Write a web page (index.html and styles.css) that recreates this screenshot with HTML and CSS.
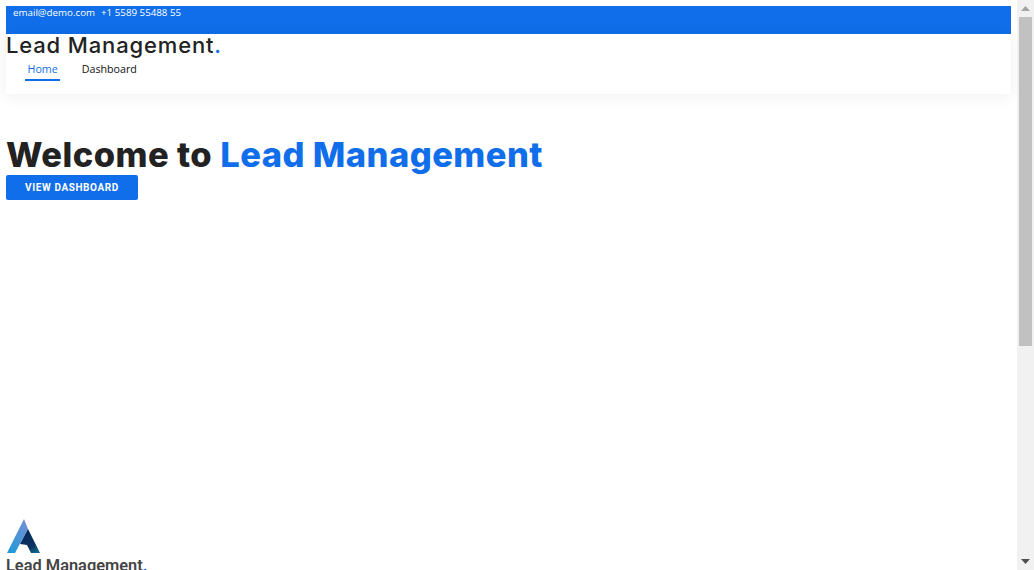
FILE: index.html
```html
<!DOCTYPE html>
<html lang="en">
<head>
<meta charset="utf-8">
<title>Lead Management</title>
<link rel="stylesheet" href="styles.css">
</head>
<body>
<div class="page">
  <div class="topbar"><span>email@demo.com</span><span>+1 5589 55488 55</span></div>
  <header class="header">
    <h1 class="logo">Lead Management<span class="dot">.</span></h1>
    <nav class="nav">
      <a class="nav-link active" href="#">Home</a>
      <a class="nav-link" href="#">Dashboard</a>
    </nav>
  </header>
  <section class="hero">
    <h2 class="hero-title">Welcome to <span class="accent">Lead Management</span></h2>
    <a class="btn" href="#">VIEW DASHBOARD</a>
  </section>
  <footer class="footer">
    <svg class="footer-logo" width="35" height="39" viewBox="0 0 35 39" aria-hidden="true">
      <defs>
        <linearGradient id="lg1" x1="0" y1="1" x2="0.7" y2="0">
          <stop offset="0" stop-color="#1a9bd8"/>
          <stop offset="1" stop-color="#6d90d6"/>
        </linearGradient>
        <linearGradient id="lg2" x1="0.3" y1="0" x2="0.8" y2="1">
          <stop offset="0" stop-color="#08265f"/>
          <stop offset="0.7" stop-color="#0a3260"/>
          <stop offset="1" stop-color="#116a8c"/>
        </linearGradient>
      </defs>
      <path d="M18 1 L1 35 L9 35 L22 11 Z" fill="url(#lg1)"/>
      <path d="M22 11 L34 35 L25 35 L21 27 L14 26 Z" fill="url(#lg2)"/>
    </svg>
    <div class="footer-name">Lead Management<span class="footer-dot">.</span></div>
  </footer>
</div>
<aside class="scrollbar" aria-hidden="true">
  <div class="sb-button">
    <svg width="9" height="5" viewBox="0 0 9 5"><path d="M4.5 0L9 5H0z" fill="#a3a3a3"/></svg>
  </div>
  <div class="sb-track"><div class="sb-thumb"></div></div>
  <div class="sb-button">
    <svg width="9" height="5" viewBox="0 0 9 5"><path d="M0 0H9L4.5 5z" fill="#505050"/></svg>
  </div>
</aside>
</body>
</html>
```
FILE: styles.css
```css
html {
  overflow: hidden;
  background: #fff;
}
body {
  margin: 0;
  font-family: "Open Sans", sans-serif;
  color: #222;
}
.page {
  padding: 6px 23px 365px 6px;
}
.scrollbar {
  position: fixed;
  top: 0;
  right: 0;
  bottom: 0;
  width: 17px;
  display: flex;
  flex-direction: column;
  background: #f1f1f1;
}
.sb-button {
  flex: none;
  height: 17px;
  display: flex;
  align-items: center;
  justify-content: center;
}
.sb-track {
  flex: 1;
  padding: 0 2px;
}
.sb-thumb {
  height: 329px;
  background: #c1c1c1;
}
.topbar {
  display: flex;
  gap: 6px;
  height: 28px;
  padding: 0 7px;
  background: #106eea;
  color: #fff;
  font-size: 9.75px;
  line-height: 14px;
  box-sizing: border-box;
}
.header {
  height: 60px;
  box-shadow: 0 2px 15px rgba(0, 0, 0, 0.07);
  background: #fff;
}
.logo {
  margin: 0;
  font-family: Inter, sans-serif;
  font-size: 22px;
  font-weight: 500;
  line-height: 22px;
  letter-spacing: 0.85px;
  color: #222;
}
.dot {
  color: #106eea;
}
.nav {
  display: flex;
  gap: 19px;
  padding: 5px 19px 0;
}
.nav-link {
  display: block;
  padding: 0 2.5px 2px;
  font-size: 10.7px;
  line-height: 16px;
  color: #111;
  text-decoration: none;
  border-bottom: 2px solid transparent;
}
.nav-link.active {
  color: #106eea;
  border-bottom-color: #106eea;
}
.hero {
  padding-top: 41px;
}
.hero-title {
  margin: 0;
  font-family: Inter, sans-serif;
  font-size: 34.5px;
  font-weight: 800;
  line-height: 40px;
  letter-spacing: 0.45px;
  color: #222;
}
.accent {
  color: #106eea;
}
.btn {
  display: block;
  width: 132px;
  height: 25px;
  border-radius: 2px;
  background: #106eea;
  color: #fff;
  font-family: Roboto, sans-serif;
  font-size: 10px;
  font-weight: 700;
  line-height: 25px;
  letter-spacing: 0.6px;
  text-align: center;
  text-decoration: none;
}
.footer {
  padding-top: 318px;
}
.footer-logo {
  display: block;
}
.footer-name {
  font-family: Roboto, sans-serif;
  font-size: 16.4px;
  font-weight: 600;
  line-height: 18px;
  color: #444;
}
.footer-dot {
  color: #106eea;
}
```
